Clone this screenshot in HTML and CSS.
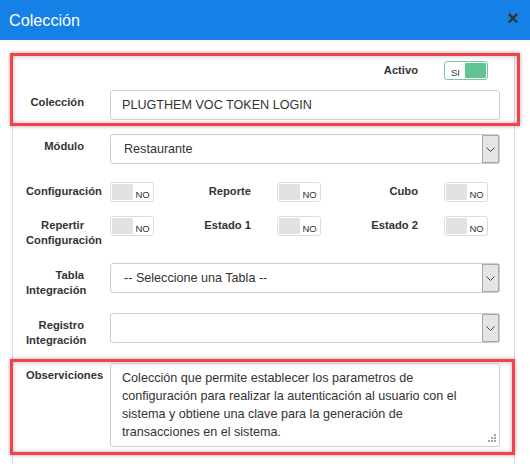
FILE: index.html
```html
<!DOCTYPE html>
<html lang="es">
<head>
<meta charset="utf-8">
<title>Colección</title>
<link rel="stylesheet" href="styles.css">
</head>
<body>
<div class="modal">
  <header class="modal-header">
    <h4 class="modal-title">Colección</h4>
    <span class="close">×</span>
  </header>
  <div class="modal-body">
    <div class="panel">
      <div class="mark mark-top">
        <div class="trow row-activo">
          <div class="tgroup"></div>
          <div class="tgroup"></div>
          <div class="tgroup">
            <span class="tlabel">Activo</span>
            <span class="switch switch-on"><span class="sw-text">SI</span><span class="knob"></span></span>
          </div>
        </div>
        <div class="frow row-coleccion">
          <span class="flabel">Colección</span>
          <div class="input">PLUGTHEM VOC TOKEN LOGIN</div>
        </div>
      </div>

      <div class="frow row-modulo">
        <span class="flabel">Módulo</span>
        <div class="select"><span class="select-value">Restaurante</span><span class="select-arrow"><svg width="9" height="5" viewBox="0 0 9 5"><polyline points="0.5,0.5 4.5,4.5 8.5,0.5" fill="none" stroke="#444" stroke-width="1"/></svg></span></div>
      </div>

      <div class="trow row-t1">
        <div class="tgroup">
          <span class="tlabel">Configuración</span>
          <span class="switch"><span class="knob"></span><span class="sw-text">NO</span></span>
        </div>
        <div class="tgroup">
          <span class="tlabel">Reporte</span>
          <span class="switch"><span class="knob"></span><span class="sw-text">NO</span></span>
        </div>
        <div class="tgroup">
          <span class="tlabel">Cubo</span>
          <span class="switch"><span class="knob"></span><span class="sw-text">NO</span></span>
        </div>
      </div>

      <div class="trow row-t2">
        <div class="tgroup">
          <span class="tlabel">Repertir Configuración</span>
          <span class="switch"><span class="knob"></span><span class="sw-text">NO</span></span>
        </div>
        <div class="tgroup">
          <span class="tlabel">Estado 1</span>
          <span class="switch"><span class="knob"></span><span class="sw-text">NO</span></span>
        </div>
        <div class="tgroup">
          <span class="tlabel">Estado 2</span>
          <span class="switch"><span class="knob"></span><span class="sw-text">NO</span></span>
        </div>
      </div>

      <div class="frow row-tabla">
        <span class="flabel">Tabla Integración</span>
        <div class="select"><span class="select-value">-- Seleccione una Tabla --</span><span class="select-arrow"><svg width="9" height="5" viewBox="0 0 9 5"><polyline points="0.5,0.5 4.5,4.5 8.5,0.5" fill="none" stroke="#444" stroke-width="1"/></svg></span></div>
      </div>

      <div class="frow row-registro">
        <span class="flabel">Registro Integración</span>
        <div class="select"><span class="select-value"></span><span class="select-arrow"><svg width="9" height="5" viewBox="0 0 9 5"><polyline points="0.5,0.5 4.5,4.5 8.5,0.5" fill="none" stroke="#444" stroke-width="1"/></svg></span></div>
      </div>

      <div class="mark mark-bottom">
        <div class="frow row-obs">
          <span class="flabel">Observiciones</span>
          <div class="textarea">Colección que permite establecer los parametros de configuración para realizar la autenticación al usuario con el sistema y obtiene una clave para la generación de transacciones en el sistema.<svg class="grip" width="8" height="8" viewBox="0 0 8 8"><rect x="6" y="0" width="2" height="2"/><rect x="3" y="3" width="2" height="2"/><rect x="6" y="3" width="2" height="2"/><rect x="0" y="6" width="2" height="2"/><rect x="3" y="6" width="2" height="2"/><rect x="6" y="6" width="2" height="2"/></svg></div>
        </div>
      </div>
    </div>
  </div>
</div>
</body>
</html>
```

FILE: styles.css
```css
html, body {
  margin: 0;
  padding: 0;
  background: #fff;
}

body {
  font-family: "Liberation Sans", Arial, sans-serif;
  color: #333;
}

.modal {
  width: 530px;
  height: 464px;
  overflow: hidden;
  background: #fff;
}

.modal-header {
  height: 40px;
  box-sizing: border-box;
  background: #1580e6;
  display: flex;
  align-items: center;
  justify-content: space-between;
  padding: 0 11px 0 9px;
}

.modal-title {
  margin: 0;
  font-size: 16.2px;
  font-weight: normal;
  color: #fff;
}

.close {
  font-size: 20px;
  font-weight: bold;
  line-height: 1;
  color: #333;
  margin-top: -4px;
}

.modal-body {
  padding: 13px 0 0 12px;
}

.panel {
  width: 503px;
  box-sizing: border-box;
  border: 1px solid #ddd;
  padding-bottom: 30px;
}

.mark {
  border: 3px solid #f2434b;
  box-shadow: 0 0 4px rgba(0, 0, 0, 0.35), inset 0 0 4px rgba(0, 0, 0, 0.3);
  margin-left: -3px;
}

.mark-top {
  margin-top: -1px;
  margin-right: -6px;
  padding-bottom: 3px;
}

.mark-bottom {
  margin-top: 11px;
  margin-right: -1px;
  padding-bottom: 5px;
}

/* label: right-aligned in a narrow box, long words overflow to the right */
.tlabel,
.flabel {
  display: block;
  width: 58px;
  margin-left: 13px;
  font-size: 11.2px;
  font-weight: bold;
  line-height: 15px;
  text-align: right;
  color: #333;
}

.tlabel {
  padding-top: 2px;
}

.flabel {
  padding-top: 5px;
}

/* toggle rows */
.trow {
  display: grid;
  grid-template-columns: repeat(3, 167px);
}

.tgroup {
  display: grid;
  grid-template-columns: 97px 70px;
  align-items: start;
}

.switch {
  width: 44px;
  height: 20px;
  box-sizing: border-box;
  border: 1px solid #ddd;
  border-radius: 3px;
  padding: 1px;
  display: flex;
  background: #fff;
}

.knob {
  width: 21px;
  background: #e2e2e2;
  border-radius: 1px;
}

.sw-text {
  flex: 1;
  font-size: 9.5px;
  line-height: 10px;
  padding-top: 6px;
  text-align: center;
  color: #333;
}

.switch-on {
  height: 19px;
  border-color: #71cb9e;
}

.switch-on .knob {
  background: #60c491;
}

.switch-on .sw-text {
  padding-top: 5px;
}

.row-activo {
  margin-top: 5px;
}

/* field rows */
.frow {
  display: grid;
  grid-template-columns: 97px 390px;
  align-items: start;
}

.input,
.select {
  height: 30px;
  box-sizing: border-box;
  border: 1px solid #ccc;
  border-radius: 3px;
  display: flex;
  align-items: center;
  font-size: 12.6px;
  color: #333;
  background: #fff;
}

.input {
  padding: 0 11px;
}

.select {
  padding-left: 13px;
}

.select-value {
  flex: 1;
}

.select-arrow {
  align-self: stretch;
  width: 17px;
  box-sizing: border-box;
  border: 1px solid #a9a9a9;
  background: #e5e5e5;
  display: flex;
  align-items: center;
  justify-content: center;
}

.textarea {
  position: relative;
  height: 84px;
  box-sizing: border-box;
  border: 1px solid #ccc;
  border-radius: 3px;
  padding: 5px 16px 5px 11px;
  font-size: 12.6px;
  line-height: 18px;
  color: #333;
}

.grip {
  position: absolute;
  right: 3px;
  bottom: 4px;
  fill: #a5a5a5;
}

.row-coleccion { margin-top: 10px; }
.row-modulo { margin-top: 8px; }
.row-t1 { margin-top: 18px; }
.row-t2 { margin-top: 14px; }
.row-tabla { margin-top: 15px; }
.row-registro { margin-top: 15px; }
.row-obs { margin-top: 1px; }
```
